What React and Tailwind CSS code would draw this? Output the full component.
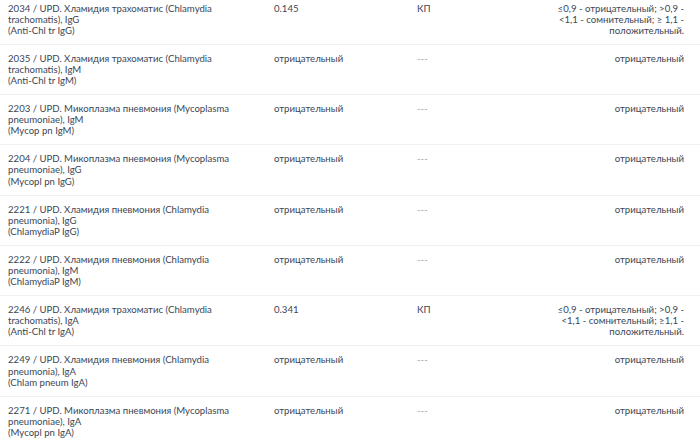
const rows = [
    {
        name: ['2034 / UPD. Хламидия трахоматис (Chlamydia trachomatis), IgG', '(Anti-Chl tr IgG)'],
        value: '0.145',
        unit: 'КП',
        norm: '≤0,9 - отрицательный; >0,9 - <1,1 - сомнительный; ≥ 1,1 - положительный.',
    },
    {
        name: ['2035 / UPD. Хламидия трахоматис (Chlamydia trachomatis), IgM', '(Anti-Chl tr IgM)'],
        value: 'отрицательный',
        unit: '---',
        norm: 'отрицательный',
    },
    {
        name: ['2203 / UPD. Микоплазма пневмония (Mycoplasma pneumoniae), IgM', '(Mycop pn IgM)'],
        value: 'отрицательный',
        unit: '---',
        norm: 'отрицательный',
    },
    {
        name: ['2204 / UPD. Микоплазма пневмония (Mycoplasma pneumoniae), IgG', '(Mycopl pn IgG)'],
        value: 'отрицательный',
        unit: '---',
        norm: 'отрицательный',
    },
    {
        name: ['2221 / UPD. Хламидия пневмония (Chlamydia pneumonia), IgG', '(ChlamydiaP IgG)'],
        value: 'отрицательный',
        unit: '---',
        norm: 'отрицательный',
    },
    {
        name: ['2222 / UPD. Хламидия пневмония (Chlamydia pneumonia), IgM', '(ChlamydiaP IgM)'],
        value: 'отрицательный',
        unit: '---',
        norm: 'отрицательный',
    },
    {
        name: ['2246 / UPD. Хламидия трахоматис (Chlamydia trachomatis), IgA', '(Anti-Chl tr IgA)'],
        value: '0.341',
        unit: 'КП',
        norm: '≤0,9 - отрицательный; >0,9 - <1,1 - сомнительный; ≥1,1 - положительный.',
    },
    {
        name: ['2249 / UPD. Хламидия пневмония (Chlamydia pneumonia), IgA', '(Chlam pneum IgA)'],
        value: 'отрицательный',
        unit: '---',
        norm: 'отрицательный',
    },
    {
        name: ['2271 / UPD. Микоплазма пневмония (Mycoplasma pneumoniae), IgA', '(Mycopl pn IgA)'],
        value: 'отрицательный',
        unit: '---',
        norm: 'отрицательный',
    },
];

export default function App() {
    return (
        <div className="w-[700px] h-[438px] overflow-hidden bg-white font-['Lato',sans-serif] text-[9.6px] leading-[11.1px] text-[#3b4656]">
            <div className="-mt-[5.5px]">
                {rows.map((r, i) => (
                    <div
                        key={i}
                        className="grid grid-cols-[266px_143px_1fr_132px] border-b border-[#f0f1f3] pl-[8px] pr-[16px] pt-[8px] pb-[8px]"
                    >
                        <div className="pr-[32px]">
                            <div>{r.name[0]}</div>
                            <div>{r.name[1]}</div>
                        </div>
                        <div>{r.value}</div>
                        <div className={r.unit === '---' ? 'text-[#a0a8b1]' : ''}>{r.unit}</div>
                        <div className="text-right">{r.norm}</div>
                    </div>
                ))}
            </div>
        </div>
    );
}
